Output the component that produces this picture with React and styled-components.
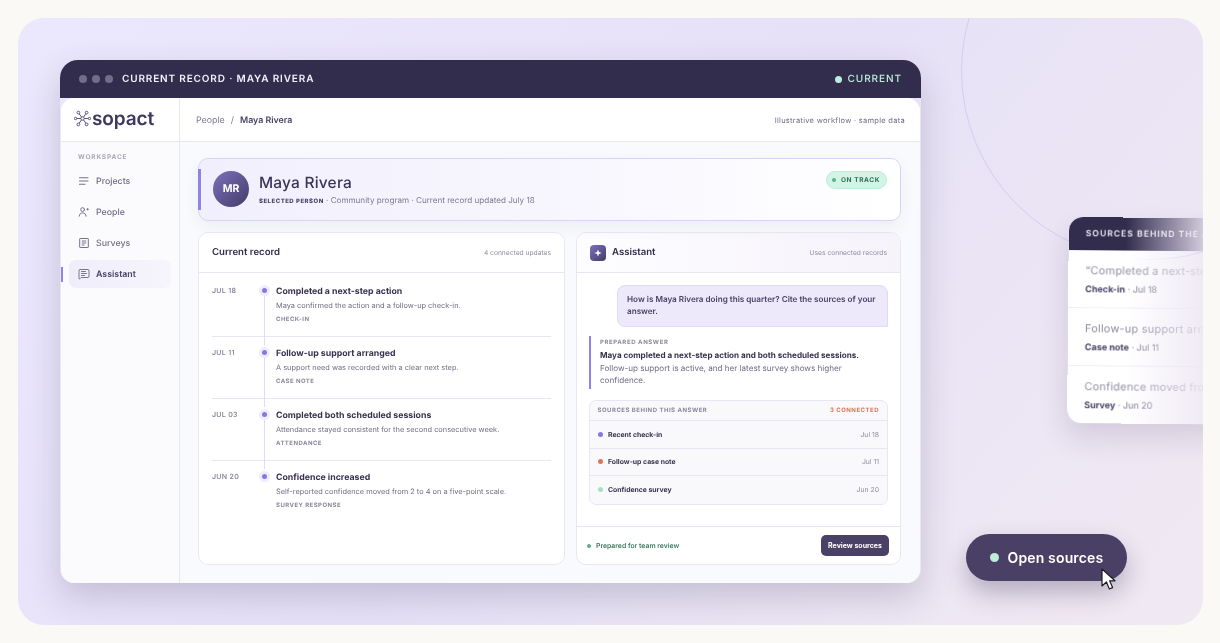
import React from "react";
import styled, { createGlobalStyle } from "styled-components";
import { MessageSquareText } from "lucide-react";

const GlobalStyle = createGlobalStyle`
  html, body {
    margin: 0;
    padding: 0;
    background: #fbf9f5;
    overflow: hidden;
  }
  body {
    font-family: "Inter", "Liberation Sans", sans-serif;
    color: #322c4d;
    text-rendering: geometricPrecision;
  }
  * { box-sizing: border-box; }
`;

const timeline = [
  { date: "JUL 18", title: "Completed a next-step action", desc: "Maya confirmed the action and a follow-up check-in.", tag: "CHECK-IN" },
  { date: "JUL 11", title: "Follow-up support arranged", desc: "A support need was recorded with a clear next step.", tag: "CASE NOTE" },
  { date: "JUL 03", title: "Completed both scheduled sessions", desc: "Attendance stayed consistent for the second consecutive week.", tag: "ATTENDANCE" },
  { date: "JUN 20", title: "Confidence increased", desc: "Self-reported confidence moved from 2 to 4 on a five-point scale.", tag: "SURVEY RESPONSE" },
];

const sources = [
  { name: "Recent check-in", date: "Jul 18", color: "#8579e0" },
  { name: "Follow-up case note", date: "Jul 11", color: "#d9775a" },
  { name: "Confidence survey", date: "Jun 20", color: "#a5e0c5" },
];

const quotes = [
  { text: "“Completed a next-step action”", kind: "Check-in", date: "Jul 18" },
  { text: "Follow-up support arranged", kind: "Case note", date: "Jul 11" },
  { text: "Confidence moved from 2 to 4", kind: "Survey", date: "Jun 20" },
];

const Stage = styled.div`
  position: relative;
  width: 1185px;
  height: 607px;
  margin: 18px 0 0 18px;
  padding: 42px;
  border-radius: 26px;
  overflow: hidden;
  will-change: transform;
  background: linear-gradient(130deg, #ebe7fc 0%, #e6e1f7 50%, #f1e9f2 100%);
`;

const Ring = styled.div`
  position: absolute;
  left: 943px;
  top: -136px;
  width: 378px;
  height: 378px;
  border-radius: 50%;
  border: 1px solid #d3cdf3;
`;

const Window = styled.div`
  position: relative;
  width: 861px;
  height: 523px;
  border-radius: 18px 18px 14px 14px;
  box-shadow: 0 14px 34px rgba(50, 44, 77, 0.2);
  display: flex;
  flex-direction: column;
`;

const WindowBar = styled.div`
  height: 38px;
  flex: none;
  display: flex;
  align-items: center;
  padding: 0 19px;
  background: #322c4d;
  border-radius: 18px 18px 0 0;
  color: #f3f1fa;
`;

const Dots = styled.div`
  display: flex;
  gap: 5px;
  margin-right: 9px;
`;

const BarDot = styled.span`
  width: 8px;
  height: 8px;
  border-radius: 50%;
  background: #726d88;
`;

const BarTitle = styled.div`
  flex: 1;
  font-size: 10px;
  font-weight: 600;
  letter-spacing: 0.85px;
`;

const BarStatus = styled.div`
  display: flex;
  align-items: center;
  gap: 6px;
  font-size: 10px;
  font-weight: 500;
  letter-spacing: 0.95px;
  color: #bdeed8;
`;

const MintDot = styled.span`
  width: 7px;
  height: 7px;
  border-radius: 50%;
  background: #bdeed8;
`;

const WindowBody = styled.div`
  flex: 1;
  margin: 0 1px;
  display: flex;
  min-height: 0;
  border-radius: 14px;
  overflow: hidden;
  background: #fff;
`;

const Sidebar = styled.aside`
  width: 119px;
  flex: none;
  border-right: 1px solid #e8e7f1;
  background: #fbfbfe;
`;

const LogoRow = styled.div`
  height: 44px;
  display: flex;
  align-items: center;
  gap: 1px;
  padding: 0 0 2px 13px;
  background: #fff;
  border-bottom: 1px solid #e8e7f1;
`;

const LogoText = styled.span`
  font-size: 19px;
  font-weight: 600;
  letter-spacing: -0.1px;
  color: #3f3760;
`;

const NavLabel = styled.div`
  margin: 11px 0 6px 17px;
  font-size: 6.5px;
  font-weight: 700;
  line-height: 8px;
  letter-spacing: 0.85px;
  color: #a9a7b8;
`;

const NavList = styled.nav`
  display: flex;
  flex-direction: column;
  gap: 3px;
  padding: 0 8px;
`;

const NavItem = styled.div`
  position: relative;
  height: 28px;
  display: flex;
  align-items: center;
  gap: 6px;
  padding-left: 9px;
  border-radius: 7px;
  font-size: 8.8px;
  font-weight: ${(p) => (p.$active ? 600 : 500)};
  color: ${(p) => (p.$active ? "#4a4266" : "#6f6c84")};
  background: ${(p) => (p.$active ? "linear-gradient(90deg,#efedfa,#f6f5fc)" : "transparent")};
  svg { flex: none; }
  ${(p) =>
    p.$active &&
    `&::before {
      content: "";
      position: absolute;
      left: -8px;
      top: 7px;
      width: 2px;
      height: 15px;
      background: #8f84e6;
    }`}
`;

const Main = styled.main`
  flex: 1;
  min-width: 0;
  display: flex;
  flex-direction: column;
  background: #f9fafd;
`;

const TopBar = styled.div`
  height: 44px;
  flex: none;
  display: flex;
  align-items: center;
  justify-content: space-between;
  padding: 2px 15px 0 16px;
  background: #fff;
  border-bottom: 1px solid #e8e7f1;
`;

const Crumbs = styled.div`
  display: flex;
  gap: 6px;
  font-size: 8.85px;
  color: #7c798f;
`;

const CrumbNow = styled.span`
  font-weight: 600;
  color: #4a4266;
`;

const TopNote = styled.div`
  font-size: 7.5px;
  letter-spacing: 0.28px;
  color: #6f6c84;
`;

const Content = styled.div`
  flex: 1;
  min-height: 0;
  display: flex;
  flex-direction: column;
  gap: 11px;
  padding: 16px 19px 18px 18px;
`;

const Hero = styled.section`
  position: relative;
  height: 63px;
  flex: none;
  display: flex;
  align-items: center;
  gap: 10px;
  padding: 0 13px 2px 14px;
  border: 1px solid #d9d4f7;
  border-radius: 10px;
  background: linear-gradient(90deg, #f1effd 0%, #f8f7fe 55%, #fff 100%);
  box-shadow: 0 6px 16px rgba(50, 44, 77, 0.06);
  &::before {
    content: "";
    position: absolute;
    left: -1px;
    top: 10px;
    width: 3px;
    height: 41px;
    background: #8f84e6;
  }
`;

const Avatar = styled.div`
  width: 36px;
  height: 36px;
  flex: none;
  display: flex;
  align-items: center;
  justify-content: center;
  border-radius: 50%;
  background: linear-gradient(135deg, #7d70bd, #443c66);
  color: #fff;
  font-size: 10.5px;
  font-weight: 700;
`;

const HeroText = styled.div`
  flex: 1;
  min-width: 0;
`;

const HeroName = styled.div`
  font-size: 15.5px;
  font-weight: 500;
  line-height: 20px;
  letter-spacing: 0.2px;
  color: #3b3458;
`;

const HeroMeta = styled.div`
  margin-top: 2px;
  font-size: 8.1px;
  color: #7c798f;
  b {
    font-size: 6px;
    font-weight: 800;
    letter-spacing: 0.5px;
    color: #4a4266;
  }
`;

const OnTrack = styled.div`
  align-self: flex-start;
  margin-top: 12px;
  height: 18px;
  display: flex;
  align-items: center;
  gap: 5px;
  padding: 0 6px 0 5px;
  border: 1px solid #bdeed8;
  border-radius: 9px;
  background: #d3f3e5;
  font-size: 6.5px;
  font-weight: 700;
  letter-spacing: 0.6px;
  color: #2f6a54;
  &::before {
    content: "";
    width: 4px;
    height: 4px;
    border-radius: 50%;
    background: #58b08d;
  }
`;

const Columns = styled.div`
  flex: 1;
  min-height: 0;
  display: grid;
  grid-template-columns: 367px 325px;
  gap: 11px;
`;

const Card = styled.section`
  display: flex;
  flex-direction: column;
  min-height: 0;
  border: 1px solid #e9e8f2;
  border-radius: 10px;
  overflow: hidden;
  background: #fff;
`;

const CardHead = styled.header`
  height: 40px;
  flex: none;
  display: flex;
  align-items: center;
  justify-content: space-between;
  padding: 0 13px;
  border-bottom: 1px solid #e8e7f1;
  background: ${(p) => (p.$tinted ? "linear-gradient(90deg,#fdfdff,#f6f3fb)" : "#fff")};
`;

const CardTitle = styled.h2`
  margin: 0;
  display: flex;
  align-items: center;
  gap: 5px;
  font-size: 9.6px;
  font-weight: 600;
  color: #322c4d;
`;

const CardNote = styled.span`
  font-size: 6.7px;
  color: #8f8da0;
`;

const TimelineList = styled.div`
  padding: 2px 13px 0;
`;

const Row = styled.div`
  position: relative;
  height: 62px;
  padding-top: 11px;
  display: grid;
  grid-template-columns: 64px 1fr;
  border-bottom: 1px solid ${(p) => (p.$last ? "transparent" : "#e8e7f1")};
  &::before {
    content: "";
    display: ${(p) => (p.$last ? "none" : "block")};
    position: absolute;
    left: 52px;
    top: 21px;
    bottom: -9px;
    width: 1px;
    background: #dfdbf5;
    z-index: 1;
  }
  &::after {
    content: "";
    position: absolute;
    left: 50px;
    top: 13px;
    width: 5px;
    height: 5px;
    border-radius: 50%;
    background: #8579e0;
    box-shadow: 0 0 0 3px #efedfb;
    z-index: 2;
  }
`;

const RowDate = styled.div`
  font-size: 7px;
  font-weight: 600;
  line-height: 10px;
  letter-spacing: 0.3px;
  color: #8b889c;
`;

const RowTitle = styled.div`
  font-size: 8.75px;
  font-weight: 700;
  line-height: 12px;
  color: #39324f;
`;

const RowDesc = styled.div`
  margin-top: 2px;
  font-size: 7.4px;
  line-height: 12px;
  color: #716e85;
`;

const RowTag = styled.div`
  margin-top: 3px;
  font-size: 6px;
  font-weight: 700;
  line-height: 10px;
  letter-spacing: 0.45px;
  color: #8b889c;
`;

const Spark = styled.span`
  width: 16px;
  height: 16px;
  margin-right: 1px;
  display: inline-flex;
  align-items: center;
  justify-content: center;
  border-radius: 4px;
  background: linear-gradient(135deg, #7d70bd, #443c66);
`;

const Chat = styled.div`
  flex: 1;
  min-height: 0;
  padding: 12px 12px 0;
  display: flex;
  flex-direction: column;
`;

const Bubble = styled.div`
  align-self: flex-end;
  width: 271px;
  height: 42px;
  padding: 7px 9px;
  border: 1px solid #dfdaf7;
  border-radius: 8px 8px 0 8px;
  background: #ede9fb;
  font-size: 8.15px;
  font-weight: 600;
  line-height: 12.4px;
  color: #4a4266;
`;

const Answer = styled.div`
  margin-top: 9px;
  height: 53px;
  padding: 1.5px 0 0 9px;
  border-left: 2px solid #8f84e6;
`;

const AnswerLabel = styled.div`
  font-size: 6px;
  font-weight: 700;
  line-height: 10px;
  letter-spacing: 0.6px;
  color: #8b889c;
`;

const AnswerText = styled.div`
  margin-top: 1.5px;
  font-size: 8.1px;
  line-height: 12.6px;
  color: #6f6c84;
  b {
    display: block;
    font-weight: 700;
    color: #39324f;
  }
`;

const SourceBox = styled.div`
  margin-top: 11px;
  border: 1px solid #e8e7f1;
  border-radius: 7px;
  background: #f9f9fc;
`;

const SourceHead = styled.div`
  height: 20px;
  display: flex;
  align-items: center;
  justify-content: space-between;
  padding: 0 8px 0 7.5px;
  border-bottom: 1px solid #e8e7f1;
  font-size: 6px;
  font-weight: 700;
  letter-spacing: 0.5px;
  color: #8b889c;
  strong {
    font-weight: 700;
    color: #d9775a;
  }
`;

const SourceRow = styled.div`
  height: 27.5px;
  display: flex;
  align-items: center;
  gap: 5.5px;
  padding: 0 8px 0 7.5px;
  border-bottom: 1px solid ${(p) => (p.$last ? "transparent" : "#e8e7f1")};
  font-size: 6.85px;
  font-weight: 700;
  color: #39324f;
  em {
    margin-left: auto;
    font-style: normal;
    font-weight: 400;
    color: #8f8da0;
  }
`;

const SourceDot = styled.span`
  width: 5px;
  height: 5px;
  border-radius: 50%;
  background: ${(p) => p.$color};
`;

const CardFoot = styled.footer`
  height: 38px;
  flex: none;
  display: flex;
  align-items: center;
  justify-content: space-between;
  padding: 0 11px 0 10px;
  border-top: 1px solid #e8e7f1;
`;

const Ready = styled.div`
  display: flex;
  align-items: center;
  gap: 5px;
  font-size: 6.85px;
  font-weight: 600;
  color: #3f7a62;
  &::before {
    content: "";
    width: 4px;
    height: 4px;
    border-radius: 50%;
    background: #58b08d;
  }
`;

const ReviewButton = styled.button`
  width: 68px;
  height: 21px;
  padding: 0;
  border: 0;
  border-radius: 5px;
  background: #4a4266;
  color: #fff;
  font-family: inherit;
  font-size: 7px;
  font-weight: 700;
`;

const FloatCard = styled.aside`
  position: absolute;
  left: 1050px;
  top: 200px;
  width: 220px;
  height: 206px;
  border-radius: 14px 0 0 14px;
  box-shadow: -2px 14px 28px rgba(50, 44, 77, 0.14);
  transform: rotate(0.5deg);
`;

const FloatInner = styled.div`
  height: 100%;
  border-radius: 14px 0 0 14px;
  overflow: hidden;
  background: #fff;
  -webkit-mask-image: linear-gradient(90deg, #000 26%, rgba(0,0,0,0.12) 62%);
  mask-image: linear-gradient(90deg, #000 26%, rgba(0,0,0,0.12) 62%);
`;

const FloatHead = styled.div`
  height: 33px;
  display: flex;
  align-items: center;
  padding-left: 17px;
  background: #322c4d;
  color: #f3f1fa;
  font-size: 8.5px;
  font-weight: 600;
  letter-spacing: 1.05px;
  white-space: nowrap;
`;

const Quote = styled.div`
  height: 58px;
  padding: 13px 0 0 17px;
  border-bottom: 1px solid ${(p) => (p.$last ? "transparent" : "#efeef5")};
  white-space: nowrap;
`;

const QuoteText = styled.div`
  font-size: 11px;
  line-height: 14px;
  letter-spacing: 0.2px;
  color: #8f8ca0;
`;

const QuoteMeta = styled.div`
  margin-top: 7px;
  font-size: 9px;
  line-height: 12px;
  color: #75728a;
  b {
    font-weight: 700;
    color: #4a4266;
  }
`;

const OpenButton = styled.button`
  position: absolute;
  left: 947.5px;
  top: 516px;
  width: 161px;
  height: 47px;
  display: flex;
  align-items: center;
  gap: 9px;
  padding: 0 0 0 24px;
  border: 0;
  border-radius: 24px;
  background: #4a4066;
  box-shadow: 0 12px 24px rgba(50, 44, 77, 0.3);
  color: #fff;
  font-family: inherit;
  font-size: 14px;
  font-weight: 600;
  letter-spacing: 0.15px;
`;

const OpenDot = styled.span`
  width: 9px;
  height: 9px;
  border-radius: 50%;
  background: #bdeed8;
`;

const Cursor = styled.svg`
  position: absolute;
  left: 1082.5px;
  top: 550px;
`;

const LogoMark = () => (
  <svg width="17" height="17" viewBox="0 0 17 17" fill="none" stroke="#5a5278" strokeWidth="1">
    <circle cx="8.5" cy="8.5" r="1.7" />
    <circle cx="4.4" cy="2.6" r="1.4" />
    <circle cx="12.6" cy="2.6" r="1.4" />
    <circle cx="4.4" cy="14.4" r="1.4" />
    <circle cx="12.6" cy="14.4" r="1.4" />
    <circle cx="1.5" cy="8.5" r="1.2" />
    <circle cx="15.5" cy="8.5" r="1.2" />
    <path d="M5.2 3.8 7.5 7.1M11.8 3.8 9.5 7.1M5.2 13.2 7.5 9.9M11.8 13.2 9.5 9.9M2.7 8.5h4.1M10.2 8.5h4.1" />
  </svg>
);

const ProjectsIcon = () => (
  <svg width="12" height="12" viewBox="0 0 12 12" fill="none" stroke="#75728a" strokeWidth="1.1" strokeLinecap="round">
    <path d="M1.5 2.8h8.5M1.5 6h8.5M1.5 9.2h5.5" />
  </svg>
);

const PeopleIcon = () => (
  <svg width="12" height="12" viewBox="0 0 12 12" fill="none" stroke="#75728a" strokeWidth="1" strokeLinecap="round">
    <circle cx="4.6" cy="3.6" r="1.9" />
    <path d="M1.2 10.2c.3-2.2 1.6-3.3 3.4-3.3s3.2 1.1 3.5 3.3" />
    <path d="M9.6 2.6v1.4M8.9 3.3h1.4" />
  </svg>
);

const SurveyIcon = () => (
  <svg width="12" height="12" viewBox="0 0 12 12" fill="none" stroke="#75728a" strokeWidth="1">
    <rect x="1.7" y="1.5" width="8.6" height="9" rx="0.5" />
    <path d="M3.8 4h4.4M3.8 6h4.4M3.8 8h2.6" />
  </svg>
);

const SparkIcon = () => (
  <svg width="8" height="8" viewBox="0 0 8 8" fill="#fff">
    <path d="M4 0.4 5 3 7.6 4 5 5 4 7.6 3 5 0.4 4 3 3Z" />
  </svg>
);

export default function App() {
  return (
    <>
      <GlobalStyle />
      <Stage>
        <Ring />
        <Window>
          <WindowBar>
            <Dots>
              <BarDot />
              <BarDot />
              <BarDot />
            </Dots>
            <BarTitle>CURRENT RECORD · MAYA RIVERA</BarTitle>
            <BarStatus>
              <MintDot />
              CURRENT
            </BarStatus>
          </WindowBar>
          <WindowBody>
            <Sidebar>
              <LogoRow>
                <LogoMark />
                <LogoText>sopact</LogoText>
              </LogoRow>
              <NavLabel>WORKSPACE</NavLabel>
              <NavList>
                <NavItem>
                  <ProjectsIcon />
                  Projects
                </NavItem>
                <NavItem>
                  <PeopleIcon />
                  People
                </NavItem>
                <NavItem>
                  <SurveyIcon />
                  Surveys
                </NavItem>
                <NavItem $active>
                  <MessageSquareText size={12} strokeWidth={1.4} />
                  Assistant
                </NavItem>
              </NavList>
            </Sidebar>
            <Main>
              <TopBar>
                <Crumbs>
                  <span>People</span>
                  <span>/</span>
                  <CrumbNow>Maya Rivera</CrumbNow>
                </Crumbs>
                <TopNote>Illustrative workflow · sample data</TopNote>
              </TopBar>
              <Content>
                <Hero>
                  <Avatar>MR</Avatar>
                  <HeroText>
                    <HeroName>Maya Rivera</HeroName>
                    <HeroMeta>
                      <b>SELECTED PERSON</b> · Community program · Current record updated July 18
                    </HeroMeta>
                  </HeroText>
                  <OnTrack>ON TRACK</OnTrack>
                </Hero>
                <Columns>
                  <Card>
                    <CardHead>
                      <CardTitle>Current record</CardTitle>
                      <CardNote>4 connected updates</CardNote>
                    </CardHead>
                    <TimelineList>
                      {timeline.map((item, i) => (
                        <Row key={item.date} $last={i === timeline.length - 1}>
                          <RowDate>{item.date}</RowDate>
                          <div>
                            <RowTitle>{item.title}</RowTitle>
                            <RowDesc>{item.desc}</RowDesc>
                            <RowTag>{item.tag}</RowTag>
                          </div>
                        </Row>
                      ))}
                    </TimelineList>
                  </Card>
                  <Card>
                    <CardHead $tinted>
                      <CardTitle>
                        <Spark>
                          <SparkIcon />
                        </Spark>
                        Assistant
                      </CardTitle>
                      <CardNote>Uses connected records</CardNote>
                    </CardHead>
                    <Chat>
                      <Bubble>How is Maya Rivera doing this quarter? Cite the sources of your answer.</Bubble>
                      <Answer>
                        <AnswerLabel>PREPARED ANSWER</AnswerLabel>
                        <AnswerText>
                          <b>Maya completed a next-step action and both scheduled sessions.</b>
                          Follow-up support is active, and her latest survey shows higher confidence.
                        </AnswerText>
                      </Answer>
                      <SourceBox>
                        <SourceHead>
                          <span>SOURCES BEHIND THIS ANSWER</span>
                          <strong>3 CONNECTED</strong>
                        </SourceHead>
                        {sources.map((s, i) => (
                          <SourceRow key={s.name} $last={i === sources.length - 1}>
                            <SourceDot $color={s.color} />
                            {s.name}
                            <em>{s.date}</em>
                          </SourceRow>
                        ))}
                      </SourceBox>
                    </Chat>
                    <CardFoot>
                      <Ready>Prepared for team review</Ready>
                      <ReviewButton>Review sources</ReviewButton>
                    </CardFoot>
                  </Card>
                </Columns>
              </Content>
            </Main>
          </WindowBody>
        </Window>
        <FloatCard>
          <FloatInner>
            <FloatHead>SOURCES BEHIND THE ANSWER</FloatHead>
            {quotes.map((q, i) => (
              <Quote key={q.kind} $last={i === quotes.length - 1}>
                <QuoteText>{q.text}</QuoteText>
                <QuoteMeta>
                  <b>{q.kind}</b> · {q.date}
                </QuoteMeta>
              </Quote>
            ))}
          </FloatInner>
        </FloatCard>
        <OpenButton>
          <OpenDot />
          Open sources
        </OpenButton>
        <Cursor width="18" height="24" viewBox="0 0 18 24">
          <path d="M1 1v17l4.4-4 3 7 3.2-1.4-3-6.8H14Z" fill="#fff" stroke="#1d1a2c" strokeWidth="1.2" strokeLinejoin="round" />
        </Cursor>
      </Stage>
    </>
  );
}
